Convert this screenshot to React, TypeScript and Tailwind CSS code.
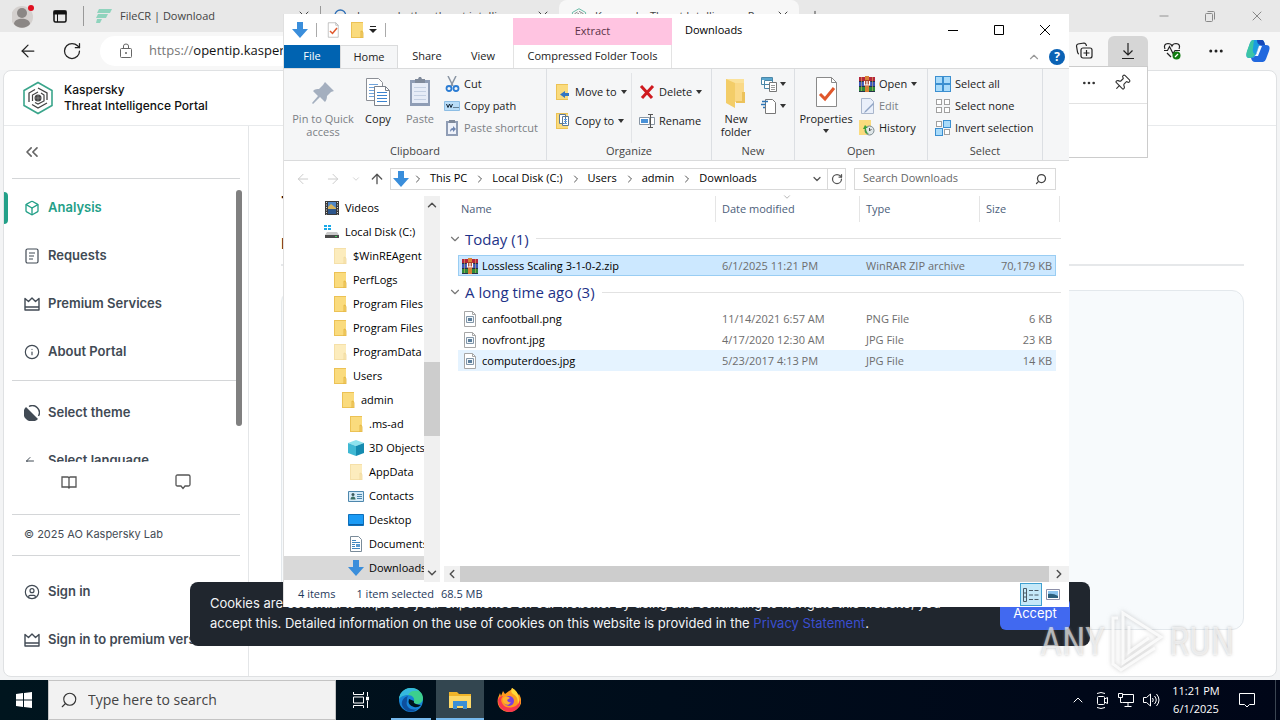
import type { ReactNode } from "react";
import clsx from "clsx";
import {
  ArrowLeft,
  ArrowRight,
  ArrowUp,
  Box,
  ChevronDown,
  ChevronRight,
  ChevronUp,
  ChevronsLeft,
  CircleUser,
  Ellipsis,
  Info,
  Minus,
  Pin,
  Plus,
  RotateCw,
  Search,
  X,
} from "lucide-react";

type TreeIcon = "video" | "disk" | "folder" | "faded" | "cube" | "contact" | "desktop" | "doc" | "down";

const TREE: { label: string; icon: TreeIcon; indent: string; active?: boolean }[] = [
  { label: "Videos", icon: "video", indent: "pl-10" },
  { label: "Local Disk (C:)", icon: "disk", indent: "pl-10" },
  { label: "$WinREAgent", icon: "faded", indent: "pl-12" },
  { label: "PerfLogs", icon: "folder", indent: "pl-12" },
  { label: "Program Files", icon: "folder", indent: "pl-12" },
  { label: "Program Files (x86)", icon: "folder", indent: "pl-12" },
  { label: "ProgramData", icon: "faded", indent: "pl-12" },
  { label: "Users", icon: "folder", indent: "pl-12" },
  { label: "admin", icon: "folder", indent: "pl-14" },
  { label: ".ms-ad", icon: "folder", indent: "pl-16" },
  { label: "3D Objects", icon: "cube", indent: "pl-16" },
  { label: "AppData", icon: "faded", indent: "pl-16" },
  { label: "Contacts", icon: "contact", indent: "pl-16" },
  { label: "Desktop", icon: "desktop", indent: "pl-16" },
  { label: "Documents", icon: "doc", indent: "pl-16" },
  { label: "Downloads", icon: "down", indent: "pl-16", active: true },
];

const GROUPS = [
  {
    title: "Today (1)",
    files: [
      { name: "Lossless Scaling 3-1-0-2.zip", date: "6/1/2025 11:21 PM", type: "WinRAR ZIP archive", size: "70,179 KB", state: "selected" },
    ],
  },
  {
    title: "A long time ago (3)",
    files: [
      { name: "canfootball.png", date: "11/14/2021 6:57 AM", type: "PNG File", size: "6 KB", state: "" },
      { name: "novfront.jpg", date: "4/17/2020 12:30 AM", type: "JPG File", size: "23 KB", state: "" },
      { name: "computerdoes.jpg", date: "5/23/2017 4:13 PM", type: "JPG File", size: "14 KB", state: "hover" },
    ],
  },
];

/* ---------- icons ---------- */

function DownArrow({ className = "h-4 w-4" }: { className?: string }) {
  return (
    <svg viewBox="0 0 16 16" className={className}>
      <path d="M5 0h6v7h5l-8 9-8-9h5z" fill="#3a8edb" />
    </svg>
  );
}

function Folder({ className = "h-4 w-4" }: { className?: string }) {
  return (
    <svg viewBox="0 0 16 16" className={className}>
      <path d="M2 0h12v15H2z" fill="#fadb7d" />
      <path d="M2 0h12v1H2zM2 0h1v15H2zM2 15h12v1H2z" fill="#ecc255" />
      <path d="M12 9q2 0 2 2v5h-2z" fill="#f7d26c" stroke="#dfb13c" strokeWidth=".8" />
    </svg>
  );
}

function RarBooks({ className = "h-4 w-4" }: { className?: string }) {
  return (
    <svg viewBox="0 0 16 16" className={className}>
      <path d="M0 1h16v4H0z" fill="#b5263c" />
      <path d="M0 6h16v4H0z" fill="#3a56b8" />
      <path d="M0 11h16v4H0z" fill="#2e8b3c" />
      <path d="M0 5h16v1H0zM0 10h16v1H0zM0 15h16v1H0z" fill="#26324a" />
      <path d="M2 1h1v14H2zM13 1h1v14h-1z" fill="#e9c860" opacity=".5" />
      <path d="M6 0h4v16H6z" fill="#d98236" />
      <path d="M5 4h6v6H5z" fill="#a9432c" />
      <path d="M5.500 5v4h5V5M8 5v4" fill="none" stroke="#fff" strokeWidth="1.200" />
    </svg>
  );
}

function ImageFile() {
  return (
    <svg viewBox="0 0 16 16" className="h-4 w-4 shrink-0">
      <path d="M2.500.5h8l3 3v12h-11z" fill="#fff" stroke="#a6a6a6" />
      <path d="M10.500.5v3h3" fill="none" stroke="#a6a6a6" />
      <path d="M4.500 5.500h7v6h-7z" fill="#f1f6fa" stroke="#8296a8" />
      <path d="M6 7h4v3H6z" fill="#5c7f9d" />
    </svg>
  );
}

function TreeGlyph({ icon }: { icon: TreeIcon }) {
  if (icon === "folder") return <Folder className="h-4 w-4 shrink-0" />;
  if (icon === "faded") return <Folder className="h-4 w-4 shrink-0 opacity-50" />;
  if (icon === "down") return <DownArrow className="h-4 w-4 shrink-0" />;
  return (
    <svg viewBox="0 0 16 16" className="h-4 w-4 shrink-0">
      {icon === "video" && (
        <>
          <path d="M1 1h14v14H1z" fill="#3b3b3b" />
          <path d="M4 2h8v6H4z" fill="#4f86c6" />
          <path d="M4 8h8v6H4z" fill="#2d568c" />
          <path d="M4 7l3-3 5 4v1H4z" fill="#d8b45c" />
          <path d="M2.500 2v13M13.500 2v13" stroke="#ddd" strokeDasharray="1 1.500" />
        </>
      )}
      {icon === "disk" && (
        <>
          <path d="M0 1h3v2H0zM4 1h3v2H4zM0 4h3v2H0zM4 4h3v2H4z" fill="#1aa9e8" />
          <path d="M3 8h10l2 3H1z" fill="#c9c9c9" />
          <path d="M1 11h14v3H1z" fill="#4a4a4a" />
          <path d="M11 12h2v1h-2z" fill="#43d15a" />
        </>
      )}
      {icon === "cube" && (
        <>
          <path d="M0 3l8-3 8 3-8 3z" fill="#8de3ee" />
          <path d="M0 3l8 3v10l-8-3z" fill="#3fb8d3" />
          <path d="M8 6l8-3v10l-8 3z" fill="#158bb0" />
        </>
      )}
      {icon === "contact" && (
        <>
          <path d="M.5 3.500h15v10H.5z" fill="#d5ebf8" stroke="#4d87ad" />
          <circle cx="5" cy="6.500" r="1.500" fill="#3d5a5c" />
          <path d="M2.500 11.500c0-4 5-4 5 0z" fill="#3d6f63" />
          <path d="M9 6.500h5M9 8.500h5M9 10.500h5" stroke="#4d87ad" />
        </>
      )}
      {icon === "desktop" && (
        <>
          <path d="M.5 2.500h15v11H.5z" fill="#1b9bf5" stroke="#0e6fba" />
          <path d="M1 12h14v1H1z" fill="#0b5fa5" />
        </>
      )}
      {icon === "doc" && (
        <>
          <path d="M2.500.5h8l3 3v12h-11z" fill="#fff" stroke="#7a8b99" />
          <path d="M4 4.500h4M4 6.500h8M4 8.500h3M4 10.500h3M4 12.500h8" stroke="#3f86bd" />
          <path d="M8 8h4v3H8z" fill="#5b9bd0" />
        </>
      )}
    </svg>
  );
}

function Caret() {
  return (
    <svg viewBox="0 0 6 4" className="h-1 w-1.5">
      <path d="M0 0h6L3 4z" fill="#333" />
    </svg>
  );
}

function PinBig() {
  return (
    <svg viewBox="0 0 32 32" className="h-8 w-8">
      <path d="M18 6l9 9-3 1-4 4c0 3-1 5-2 6l-5-5-7 7-1-1 6-7-5-5c2-2 4-2 6-2l4-4z" fill="#a4afbf" />
    </svg>
  );
}

function CopyPages() {
  return (
    <svg viewBox="0 0 32 32" className="h-8 w-8">
      <path d="M4.500 2.500h12l4 4v18h-16z" fill="#fff" stroke="#8b8f96" />
      <path d="M7 8.500h9M7 11.500h9M7 14.500h9M7 17.500h9M7 20.500h9" stroke="#6fa3db" />
      <path d="M12.500 10.500h11l4 4v15h-15z" fill="#fff" stroke="#7b828c" />
      <path d="M23.500 10.500v4h4" fill="none" stroke="#7b828c" />
      <path d="M15 16.500h10M15 19.500h10M15 22.500h10M15 25.500h10" stroke="#3b83cf" />
    </svg>
  );
}

function ClipboardBig() {
  return (
    <svg viewBox="0 0 32 32" className="h-8 w-8">
      <path d="M6 4h20v26H6z" fill="#8f9db5" />
      <path d="M8 7h16v20H8z" fill="#e6ecf7" />
      <path d="M11 3h3l1-2h2l1 2h3v4H11z" fill="#7f8a9b" />
      <path d="M10 11.500h12M10 15.500h12M10 19.500h12M10 23.500h12" stroke="#c3cfe2" />
    </svg>
  );
}

function CheckPage({ className }: { className: string }) {
  return (
    <svg viewBox="0 0 32 32" className={className}>
      <path d="M6.500 1.500h15l5 5v24h-20z" fill="#fff" stroke="#8a8a8a" />
      <path d="M21.500 1.500v5h5" fill="none" stroke="#8a8a8a" />
      <path d="M10 18l5 5 9-11" fill="none" stroke="#e0572b" strokeWidth="3" />
    </svg>
  );
}

function FolderBig() {
  return (
    <svg viewBox="0 0 32 32" className="h-8 w-8">
      <path d="M6 3h18v23H6z" fill="#fbe29a" />
      <path d="M6 3l9 4v25l-9-5z" fill="#f3cd68" />
      <path d="M15 7h9v19h-9z" fill="#fad987" />
      <path d="M22 16h3v11h-9v-2h6z" fill="#ecc25b" />
    </svg>
  );
}

function Tiles({ kind }: { kind: "all" | "none" | "invert" }) {
  const cells = [
    [1, 1],
    [9, 1],
    [1, 9],
    [9, 9],
  ];
  return (
    <svg viewBox="0 0 16 16" className="h-4 w-4">
      {cells.map(([x, y], i) => {
        const on = kind === "all" || (kind === "invert" && (i === 1 || i === 2));
        return on ? (
          <rect key={i} x={x - 0.5} y={y - 0.5} width="7" height="7" fill="#a9dbfa" stroke="#3b8fd0" />
        ) : (
          <rect key={i} x={x + 0.5} y={y + 0.5} width="5" height="5" fill="#fff" stroke="#a0a0a0" />
        );
      })}
    </svg>
  );
}

/* ---------- browser ---------- */

function BrowserTab({ label, icon, className }: { label: string; icon: ReactNode; className: string }) {
  return (
    <div className={clsx("flex h-full items-center gap-2 pr-2", className)}>
      {icon}
      <button className="flex-1 truncate text-left">{label}</button>
      <button aria-label="Close tab">
        <X className="h-4 w-4" strokeWidth={1.5} />
      </button>
    </div>
  );
}

function BrowserChrome() {
  return (
    <div className="text-[11px] text-[#444]">
      <div className="flex h-8 items-center bg-[#e8e8e8]">
        <button aria-label="Profile" className="ml-3 mr-4">
          <svg viewBox="0 0 24 24" className="h-6 w-6">
            <circle cx="10" cy="13" r="11" fill="#d4d0ce" />
            <circle cx="10" cy="9" r="5" fill="#8b8785" />
            <path d="M2 20c0-7 16-7 16 0-4 5-12 5-16 0z" fill="#8b8785" />
            <circle cx="19" cy="4" r="3" fill="#e01020" />
          </svg>
        </button>
        <button aria-label="Tab actions">
          <svg viewBox="0 0 16 16" className="h-4 w-4">
            <rect x="2" y="3" width="12" height="11" rx="1.500" fill="none" stroke="#111" strokeWidth="1.500" />
            <path d="M1.500 2.500h13v4h-13z" fill="#111" />
            <path d="M5.500 6v8" stroke="#111" />
          </svg>
        </button>
        <div className="ml-[15px] h-5 w-px bg-[#999]" />
        <BrowserTab
          className="w-[236px] pl-3"
          label="FileCR | Download"
          icon={
            <svg viewBox="0 0 16 16" className="h-4 w-4 shrink-0">
              <path d="M3 1h13l-2 4H1zM2 6h10l-2 4H0zM1 11h5l-2 4H0z" fill="#8fd3bd" />
            </svg>
          }
        />
        <div className="h-5 w-px bg-[#999]" />
        <BrowserTab
          className="w-[238px] pl-3"
          label="Learn whether threat intelligence"
          icon={<Search className="h-4 w-4 text-[#2f6fb5]" />}
        />
        <BrowserTab
          className="w-60 rounded-t-lg bg-[#f7f7f7] pl-3"
          label="Kaspersky Threat Intelligence Portal"
          icon={<KasperskyMark className="h-4 w-4" />}
        />
        <button aria-label="New tab" className="ml-2">
          <Plus className="h-4 w-4" strokeWidth={1.5} />
        </button>
        <div className="ml-auto flex items-center gap-8 pr-[15px] text-[#888]">
          <button aria-label="Minimize browser">
            <Minus className="h-3.5 w-3.5" strokeWidth={1.5} />
          </button>
          <button aria-label="Restore browser">
            <svg viewBox="0 0 14 14" className="h-3.5 w-3.5" fill="none" stroke="currentColor">
              <rect x="2.500" y="4.500" width="7" height="8" rx="1" />
              <path d="M4.500 2.500h6q1 0 1 1v7" />
            </svg>
          </button>
          <button aria-label="Close browser">
            <X className="h-4 w-4" strokeWidth={1.5} />
          </button>
        </div>
      </div>
      <div className="flex h-[38px] items-center bg-[#f7f7f7] text-[#222]">
        <button aria-label="Back" className="ml-[18px]">
          <ArrowLeft className="h-5 w-5" strokeWidth={1.5} />
        </button>
        <button aria-label="Reload" className="mr-[18px] ml-6">
          <RotateCw className="h-5 w-5" strokeWidth={1.5} />
        </button>
        <button aria-label="Address" className="flex h-[30px] flex-1 items-center rounded-full bg-white pl-[19px] text-[13px]">
          <svg viewBox="0 0 14 16" className="mr-4 h-4 w-3.5" fill="none" stroke="#666">
            <rect x="1.500" y="5.500" width="11" height="9" rx="1" />
            <path d="M4.500 5.500V3q0-2 2.500-2t2.500 2v2.500" />
            <circle cx="7" cy="10" r=".6" fill="#666" />
          </svg>
          <span className="text-[#777]">https://</span>
          <span className="text-[#111]">opentip.kaspersky.com</span>
        </button>
        <div className="flex items-center">
          <button aria-label="Collections" className="flex w-12 justify-center">
            <svg viewBox="0 0 18 18" className="h-[18px] w-[18px]" fill="none" stroke="#222" strokeWidth="1.200">
              <rect x="6" y="6" width="11" height="10" rx="2" />
              <path d="M11.500 8v6M8.500 11h6M4 12Q3 12 2.500 10L1.500 4q0-1.500 1.500-2l6-1q2 0 2.500 3" />
            </svg>
          </button>
          <button aria-label="Downloads" className="flex h-[30px] w-10 items-center justify-center rounded-t-md bg-[#d6d6d6]">
            <svg viewBox="0 0 16 16" className="h-4 w-4" fill="none" stroke="#222" strokeWidth="1.200">
              <path d="M8 0v12M3.500 7.500L8 12l4.500-4.500M2 15.500h12" />
            </svg>
          </button>
          <button aria-label="Browser essentials" className="flex w-12 justify-center">
            <svg viewBox="0 0 18 18" className="h-[18px] w-[18px]" fill="none" stroke="#222" strokeWidth="1.200">
              <path d="M2 7Q0 2 5 1.500q3 0 4 2.500 1-2.500 4-2.500Q18 2 16 7M1 8.500h3.500l2-4 3.500 7 2-3h5M4 11l4 4" />
              <circle cx="13.500" cy="13.500" r="4" fill="#107c10" stroke="none" />
              <path d="M12 15l3-3" stroke="#fff" />
            </svg>
          </button>
          <button aria-label="More" className="flex w-10 justify-center">
            <Ellipsis className="h-[18px] w-[18px]" />
          </button>
          <button aria-label="Copilot" className="flex w-11 justify-center">
            <svg viewBox="0 0 24 24" className="h-6 w-6">
              <path d="M7 1h9q2 0 3 5h-4q-2 0-3 3l-2 6q-1 4-4 4H3q-4 0-2-6l3-9q1-3 3-3z" fill="#1b9de0" />
              <path d="M1 12l3-8q1-3 4-3l-1 8q-1 5 2 6-2 4-5 4-5 0-3-7z" fill="#3cc5a5" />
              <path d="M17 23H9q-3 0-4-4 4 0 5-4l2-6q1-3 4-3h4q5 0 3 6l-3 8q-1 3-3 3z" fill="#2168de" />
              <path d="M13 7h3l-4 10H8q2 0 3-4z" fill="#f4fbff" />
              <path d="M8 1h8q2 0 3 5h-5q-3-1-3-5z" fill="#1547b8" />
            </svg>
          </button>
        </div>
      </div>
    </div>
  );
}

function DownloadsFlyout() {
  return (
    <div className="absolute top-[66px] right-[132px] h-[92px] w-80 border border-[#ccc] bg-white">
      <div className="flex h-[37px] items-center justify-end gap-4 border-b border-[#e2e2e2] pr-4 pb-1 text-[#333]">
        <Ellipsis className="h-4 w-4" />
        <Pin className="h-[18px] w-[18px] rotate-45" strokeWidth={1.5} />
      </div>
    </div>
  );
}

function KasperskyMark({ className }: { className: string }) {
  return (
    <svg viewBox="0 0 32 34" className={className} fill="none">
      <path d="M16 1.500l14 8v15l-14 8-14-8v-15z" stroke="#3aa58b" strokeWidth="1.600" />
      <path d="M7 21v-9l6-3.500M16 7l9 5v7M25 22l-9 5-6-3.500" stroke="#444" strokeWidth="1.300" />
      <path d="M10.500 20v-6l5.500-3M19 12l3 2v6l-6 3-3-1.500" stroke="#444" strokeWidth="1.200" />
      <circle cx="16" cy="17" r="3.500" fill="#444" />
      <path d="M13 17h6M16 14v6" stroke="#aaa" strokeWidth=".5" />
    </svg>
  );
}

function PremiumCrown({ className }: { className: string }) {
  return (
    <svg viewBox="0 0 16 16" className={className} fill="none" stroke="currentColor" strokeWidth="1.400">
      <path d="M1 2.500l3.500 3L8 2l3.500 3.500 3.500-3v11.500H1zM1 11h14" strokeLinejoin="round" />
    </svg>
  );
}

function NavItem({ icon, label, active }: { icon: ReactNode; label: string; active?: boolean }) {
  return (
    <a
      href="#"
      className={clsx(
        "flex h-12 items-center gap-2 pl-3 text-[13px] font-semibold whitespace-nowrap",
        active ? "text-[#23a088]" : "text-[#414a54]",
      )}
    >
      {icon}
      {label}
    </a>
  );
}

function Sidebar() {
  const glyph = "h-4 w-4 shrink-0";
  return (
    <aside className="relative flex w-[245px] shrink-0 flex-col border-r border-[#e4e6e8]">
      <button aria-label="Collapse menu" className="flex h-[52px] items-center pl-[18px] text-[#666]">
        <ChevronsLeft className="h-5 w-5" strokeWidth={2} />
      </button>
      <nav className="mx-2 h-[284px] overflow-hidden border-t border-[#d4d6d8] pt-[5px]">
        <NavItem
          active
          icon={<Box className={glyph} />}
          label="Analysis"
        />
        <NavItem
          icon={
            <svg viewBox="0 0 16 16" className={glyph} fill="none" stroke="currentColor" strokeWidth="1.200">
              <rect x="2" y="1" width="12" height="14" rx="1.500" />
              <path d="M5 5h6M5 8h5M5 11h4" />
            </svg>
          }
          label="Requests"
        />
        <NavItem icon={<PremiumCrown className={glyph} />} label="Premium Services" />
        <NavItem icon={<Info className={glyph} strokeWidth={1.75} />} label="About Portal" />
        <div className="mt-1 border-t border-[#d4d6d8] pt-2">
          <NavItem
            icon={
              <svg viewBox="0 0 16 16" className={glyph}>
                <path d="M5 1.500A7 7 0 0 1 14.500 11" fill="none" stroke="currentColor" strokeWidth="1.400" />
                <path d="M2 2l12 12A8 8 0 0 1 2 2z" fill="currentColor" />
              </svg>
            }
            label="Select theme"
          />
          <NavItem icon={<ArrowLeft className="mr-1 h-3 w-3 shrink-0" />} label="Select language" />
        </div>
      </nav>
      <div className="absolute top-16 right-[6px] h-[236px] w-[6px] rounded-full bg-[#808080]" />
      <div className="mx-2 flex h-[53px] items-center justify-around border-b border-[#d4d6d8] pb-3 text-[#555]">
        <button aria-label="Documentation">
          <svg viewBox="0 0 16 16" className={glyph} fill="none" stroke="currentColor" strokeWidth="1.300">
            <path d="M1 3h6l1 1 1-1h6v10H9l-1 1-1-1H1zM8 4v10" />
          </svg>
        </button>
        <button aria-label="Feedback">
          <svg viewBox="0 0 16 16" className={glyph} fill="none" stroke="currentColor" strokeWidth="1.300">
            <path d="M2.500 1h11q1.500 0 1.500 1.500v8q0 1.500-1.500 1.500H10l-2 2.500L6 12H2.500Q1 12 1 10.500v-8Q1 1 2.500 1z" />
          </svg>
        </button>
      </div>
      <p className="mx-2 flex h-[41px] items-center border-b border-[#d4d6d8] pb-px pl-3 text-[11px] text-[#444c55]">
        © 2025 AO Kaspersky Lab
      </p>
      <div className="mx-2 pt-3">
        <NavItem icon={<CircleUser className={glyph} strokeWidth={1.75} />} label="Sign in" />
        <NavItem icon={<PremiumCrown className={glyph} />} label="Sign in to premium version" />
      </div>
    </aside>
  );
}

function PortalPage() {
  return (
    <div className="relative mx-[3px] mb-[3px] flex flex-1 flex-col rounded-lg border border-[#dfe1e3] bg-white font-['Inter',sans-serif]">
      <header className="flex h-[55px] shrink-0 items-center gap-2.5 border-b border-[#e8eaec] pl-[18px]">
        <KasperskyMark className="h-[34px] w-8" />
        <p className="text-xs leading-4 font-medium text-[#111]">
          Kaspersky
          <br />
          Threat Intelligence Portal
        </p>
      </header>
      <div className="flex flex-1">
        <Sidebar />
        <main className="flex flex-1 flex-col px-8 pt-[68px] pb-[46px]">
          <h1 className="text-xl leading-5 font-semibold text-[#111]">Threat Analysis</h1>
          <div className="mt-[22px] mb-6 border-b-2 border-[#e6e8ea] pb-3 text-sm leading-4 text-[#111]">Lookup</div>
          <section className="flex-1 rounded-xl border border-[#e3e8ec] bg-[#f7fafc]" />
        </main>
      </div>
      <div className="absolute top-[121px] left-0 h-8 w-1 rounded-r bg-[#23a088]" />
    </div>
  );
}

function CookieBanner() {
  return (
    <div className="absolute right-[190px] bottom-[74px] left-[190px] flex h-16 items-center justify-between rounded-lg bg-[#20262e] px-5 font-['Inter',sans-serif]">
      <p className="max-w-[760px] pb-0.5 text-[13px] leading-5 text-[#f2f4f6]">
        Cookies are essential to improve your experience on our website. By using and continuing to navigate this website, you
        <br />
        accept this. Detailed information on the use of cookies on this website is provided in the{" "}
        <a href="#" className="text-[#3b4ed0]">
          Privacy Statement
        </a>
        .
      </p>
      <button className="h-8 w-[70px] rounded-md bg-[#4169f0] text-[13px] text-white">Accept</button>
    </div>
  );
}

/* ---------- explorer window ---------- */

function RibbonGroup({ title, className, children }: { title: string; className: string; children: ReactNode }) {
  return (
    <div className={clsx("flex flex-col border-r border-[#dcdfe3] pt-1", className)}>
      <div className="flex h-[70px]">{children}</div>
      <p className="text-center leading-4 text-[#444]">{title}</p>
    </div>
  );
}

function BigButton({ icon, label, className, muted }: { icon: ReactNode; label: ReactNode; className: string; muted?: boolean }) {
  return (
    <button
      className={clsx("flex flex-col items-center gap-1 self-start pt-[3px] leading-[13px]", className, muted && "text-[#7b7f85]")}
    >
      {icon}
      <span className="text-center whitespace-nowrap">{label}</span>
    </button>
  );
}

function RibbonButton({ icon, label, menu, muted }: { icon: ReactNode; label: string; menu?: boolean; muted?: boolean }) {
  return (
    <button className={clsx("flex h-[22px] items-center gap-1 whitespace-nowrap", muted && "text-[#7b7f85]")}>
      {icon}
      {label}
      {menu && <Caret />}
    </button>
  );
}

function Ribbon() {
  return (
    <div className="flex h-[93px] border-y border-[#dadbdc] bg-[#f5f6f7]">
      <RibbonGroup title="Clipboard" className="w-[263px]">
        <BigButton
          muted
          className="w-[78px]"
          icon={<PinBig />}
          label={
            <>
              Pin to Quick
              <br />
              access
            </>
          }
        />
        <BigButton className="w-8" icon={<CopyPages />} label="Copy" />
        <BigButton muted className="ml-2 w-9" icon={<ClipboardBig />} label="Paste" />
        <div className="ml-1.5 flex flex-col">
          <RibbonButton
            icon={
              <svg viewBox="0 0 16 16" className="h-4 w-4" fill="none">
                <path d="M4 0l5 10M12 0L7 10" stroke="#8a95a3" strokeWidth="1.500" />
                <circle cx="5" cy="12.500" r="2.500" stroke="#2b7cd3" strokeWidth="1.800" />
                <circle cx="12" cy="12.500" r="2.500" stroke="#2b7cd3" strokeWidth="1.800" />
              </svg>
            }
            label="Cut"
          />
          <RibbonButton
            icon={
              <svg viewBox="0 0 16 16" className="h-4 w-4">
                <path d="M.5 3.500h15v9H.5z" fill="#b9ddf8" stroke="#8cbde4" />
                <path d="M2.500 6l1.500 3.500L5.500 6 7 9.500 8.500 6M9.500 9.500h1M11.500 9.500h1M13.500 9.500h1" stroke="#123" fill="none" />
              </svg>
            }
            label="Copy path"
          />
          <RibbonButton
            muted
            icon={
              <svg viewBox="0 0 16 16" className="h-4 w-4">
                <path d="M2 1h12v15H2z" fill="#8f9db5" />
                <path d="M4 3h8v11H4z" fill="#eef2fa" />
                <path d="M5 0h6v3H5z" fill="#7f8a9b" />
                <path d="M6 12q0-4 3-4V6l3 3-3 3v-2q-2 0-3 2z" fill="#6f86b0" />
              </svg>
            }
            label="Paste shortcut"
          />
        </div>
      </RibbonGroup>
      <RibbonGroup title="Organize" className="w-[165px]">
        <div className="flex w-[85px] flex-col gap-[7px] border-r border-[#e2e4e7] pt-2 pl-2">
          <RibbonButton
            menu
            icon={
              <svg viewBox="0 0 16 16" className="h-4 w-4">
                <path d="M1 0h12v15H1z" fill="#fadb7d" />
                <path d="M1 0h12v1H1zM1 0h1v15H1zM1 15h12v1H1z" fill="#ecc255" />
                <path d="M14 9v3h-4v2l-5-3.500L10 7v2z" fill="#3476c4" />
              </svg>
            }
            label="Move to"
          />
          <RibbonButton
            menu
            icon={
              <svg viewBox="0 0 16 16" className="h-4 w-4">
                <path d="M1 0h12v15H1z" fill="#fadb7d" />
                <path d="M1 0h12v1H1zM1 0h1v15H1zM1 15h12v1H1z" fill="#ecc255" />
                <path d="M4.500 1.500h6v9h-6zM7.500 3.500h6v9h-6z" fill="#fff" stroke="#5c7896" />
                <path d="M9 6.500h3M9 8.500h3M9 10.500h3" stroke="#5a9be0" />
              </svg>
            }
            label="Copy to"
          />
        </div>
        <div className="flex flex-col gap-[7px] pt-2 pl-[7px]">
          <RibbonButton
            menu
            icon={
              <svg viewBox="0 0 16 16" className="h-4 w-4">
                <path d="M2 2l11 12M14 2L3 14" stroke="#cf1a1f" strokeWidth="3" />
              </svg>
            }
            label="Delete"
          />
          <RibbonButton
            icon={
              <svg viewBox="0 0 16 16" className="h-4 w-4" fill="none">
                <path d="M.5 4.500h10v7H.5zM12 4.500h3.500v7H12" fill="#fff" stroke="#8895a3" />
                <path d="M2 6h7v4H2z" fill="#4a92d8" />
                <path d="M9 1.500h5M11.500 1.500v13M9 14.500h5" stroke="#555" />
              </svg>
            }
            label="Rename"
          />
        </div>
      </RibbonGroup>
      <RibbonGroup title="New" className="w-[83px]">
        <BigButton
          className="ml-1 w-10"
          icon={<FolderBig />}
          label={
            <>
              New
              <br />
              folder
            </>
          }
        />
        <div className="flex flex-col pl-[5px]">
          <button aria-label="New item" className="flex h-[22px] items-center gap-[3px]">
            <svg viewBox="0 0 16 16" className="h-4 w-4" fill="#fff">
              <path d="M.5 1.500h11v7H.5zM3.500 4.500h8v8h-8z" stroke="#4b87a8" />
              <path d="M8.500 6.500h7v9h-7z" stroke="#777" />
              <path d="M1 2h10v2H1z" fill="#5aa7cf" />
              <path d="M10 9.500h4M10 11.500h4M10 13.500h4" stroke="#999" />
            </svg>
            <Caret />
          </button>
          <button aria-label="Easy access" className="flex h-[22px] items-center gap-[3px]">
            <svg viewBox="0 0 16 16" className="h-4 w-4" fill="#fff">
              <path d="M4.500 1.500h7l3 3v11h-10z" stroke="#777" />
              <path d="M1 3.500h6M0 6.500h5M2 9.500h2" stroke="#2e75b5" strokeWidth="1.500" />
            </svg>
            <Caret />
          </button>
        </div>
      </RibbonGroup>
      <RibbonGroup title="Open" className="w-[133px]">
        <BigButton
          className="w-[62px]"
          icon={<CheckPage className="h-8 w-8" />}
          label={
            <>
              Properties
              <span className="flex h-3 items-center justify-center">
                <Caret />
              </span>
            </>
          }
        />
        <div className="flex flex-col pl-0.5">
          <RibbonButton menu icon={<RarBooks />} label="Open" />
          <RibbonButton
            muted
            icon={
              <svg viewBox="0 0 16 16" className="h-4 w-4">
                <path d="M2.500.5h9l3 3v12h-12z" fill="#e9effa" stroke="#a9b6cc" />
                <path d="M14 5l-8 8-1 2 2-1 8-8z" fill="#8fa4c4" />
              </svg>
            }
            label="Edit"
          />
          <RibbonButton
            icon={
              <svg viewBox="0 0 16 16" className="h-4 w-4">
                <path d="M0 0h12v15H0z" fill="#fadb7d" />
                <circle cx="10.500" cy="10.500" r="4.500" fill="#dfe6e8" stroke="#7b8a90" />
                <path d="M4 9l2-4 3 3-2 0q0 4 3 6-5 0-4-5z" fill="#3ba03b" />
                <path d="M10.500 8v3l2-2" stroke="#555" fill="none" />
              </svg>
            }
            label="History"
          />
        </div>
      </RibbonGroup>
      <RibbonGroup title="Select" className="w-[115px]">
        <div className="flex flex-col pl-[7px]">
          <RibbonButton icon={<Tiles kind="all" />} label="Select all" />
          <RibbonButton icon={<Tiles kind="none" />} label="Select none" />
          <RibbonButton icon={<Tiles kind="invert" />} label="Invert selection" />
        </div>
      </RibbonGroup>
    </div>
  );
}

function TitleBar() {
  return (
    <div className="flex h-[54px] bg-white">
      <div className="flex w-[229px] flex-col">
        <div className="flex h-[31px] items-center gap-2 pl-2">
          <DownArrow />
          <div className="h-3.5 w-px bg-[#aaa]" />
          <CheckPage className="h-4 w-4" />
          <Folder className="h-4 w-4" />
          <svg viewBox="0 0 8 8" className="-ml-1 h-2 w-2">
            <path d="M1 0h6v1H1zM0 3h8L4 7z" fill="#222" />
          </svg>
          <div className="h-3.5 w-px bg-[#aaa]" />
        </div>
        <div className="flex h-[23px]">
          <button className="w-14 bg-[#0063b1] text-white">File</button>
          <button className="w-[58px] border-x border-t border-[#dadbdc] bg-[#f5f6f7]">Home</button>
          <button className="w-[58px]">Share</button>
          <button className="w-[54px]">View</button>
        </div>
      </div>
      <div className="mt-1 flex w-[159px] flex-col">
        <div className="flex h-[27px] items-center justify-center bg-[#ffc4e1] text-[#5b3348]">Extract</div>
        <button className="h-[23px] border-x border-[#e3e3e3] whitespace-nowrap">Compressed Folder Tools</button>
      </div>
      <p className="pt-[8px] pl-[13px] leading-4 text-black">Downloads</p>
      <div className="ml-auto flex flex-col">
        <div className="flex h-[31px] items-center gap-[34px] pr-[18px] text-black">
          <button aria-label="Minimize">
            <svg viewBox="0 0 12 12" className="h-3 w-3" stroke="currentColor">
              <path d="M1 6.500h10" />
            </svg>
          </button>
          <button aria-label="Maximize">
            <svg viewBox="0 0 12 12" className="h-3 w-3" stroke="currentColor" fill="none">
              <path d="M1.500 1.500h9v9h-9z" />
            </svg>
          </button>
          <button aria-label="Close">
            <svg viewBox="0 0 12 12" className="h-3 w-3" stroke="currentColor">
              <path d="M1 1l10 10M11 1L1 11" />
            </svg>
          </button>
        </div>
        <div className="flex h-[23px] items-center justify-end gap-2 pr-1">
          <ChevronUp className="h-3.5 w-3.5 text-[#999]" />
          <button aria-label="Help" className="h-4 w-4 rounded-full bg-[#0a62b5] text-xs leading-4 font-bold text-white">
            ?
          </button>
        </div>
      </div>
    </div>
  );
}

function AddressRow() {
  const crumbs = ["This PC", "Local Disk (C:)", "Users", "admin", "Downloads"];
  return (
    <div className="flex h-[35px] items-center pr-[13px] pl-[11px] text-black">
      <ArrowLeft className="h-4 w-4 text-[#ccc]" strokeWidth={1.5} />
      <ArrowRight className="ml-3.5 h-4 w-4 text-[#ccc]" strokeWidth={1.5} />
      <ChevronDown className="ml-2.5 h-2.5 w-2.5 text-[#ccc]" />
      <ArrowUp className="mr-[5px] ml-2 h-4 w-4 text-[#555]" />
      <div className="flex h-[22px] flex-1 items-center border border-[#d9d9d9] pl-[2px]">
        <DownArrow />
        {crumbs.map((crumb) => (
          <span key={crumb} className="flex items-center first-of-type:-ml-1">
            <ChevronRight className="mr-1.5 ml-[7px] h-3 w-3 text-[#555]" />
            <button className="whitespace-nowrap">{crumb}</button>
          </span>
        ))}
        <ChevronDown className="ml-auto mr-1 h-3 w-3 text-[#555]" strokeWidth={2.5} />
        <button aria-label="Refresh" className="flex h-full w-[18px] items-center justify-center border-l border-[#d9d9d9]">
          <RotateCw className="h-3 w-3 text-[#555]" strokeWidth={2.5} />
        </button>
      </div>
      <label className="ml-2 flex h-[22px] w-[202px] items-center border border-[#d9d9d9] pr-2 pl-2">
        <input aria-label="Search Downloads" placeholder="Search Downloads" className="min-w-0 flex-1 outline-none placeholder:text-[#666]" />
        <Search className="h-3 w-3 -scale-x-100 text-[#444]" strokeWidth={2.5} />
      </label>
    </div>
  );
}

function FolderTree() {
  return (
    <div className="flex w-[156px] shrink-0">
      <ul className="w-[140px] overflow-hidden text-black">
        {TREE.map((node, i) => (
          <li key={i} className={clsx("flex h-6 items-center gap-[5px] whitespace-nowrap", node.indent, node.active && "bg-[#d9d9d9]")}>
            <TreeGlyph icon={node.icon} />
            {node.label}
          </li>
        ))}
      </ul>
      <div className="flex w-4 flex-col items-center bg-[#f0f0f0]">
        <ChevronUp className="my-0.5 h-3.5 w-3.5 text-[#505050]" strokeWidth={2.5} />
        <div className="mt-auto mb-[130px] h-[74px] w-full bg-[#cdcdcd]" />
        <ChevronDown className="mb-0.5 h-3.5 w-3.5 text-[#505050]" strokeWidth={2.5} />
      </div>
    </div>
  );
}

function FileTable() {
  const cell = "border-y leading-4";
  return (
    <table className="w-full table-fixed border-separate border-spacing-0 text-left text-[#6d6d6d]">
      <colgroup>
        <col className="w-[14px]" />
        <col />
        <col className="w-36" />
        <col className="w-[120px]" />
        <col className="w-[76px]" />
        <col className="w-1" />
        <col className="w-[9px]" />
      </colgroup>
      <thead>
        <tr className="h-[26px] text-[#4c607a]">
          <th />
          <th className="border-r border-[#e5e5e5] pl-[3px] font-normal">Name</th>
          <th className="relative border-r border-[#e5e5e5] pl-1.5 font-normal">
            Date modified
            <ChevronDown className="absolute -top-1 left-[66px] h-2.5 w-2.5 text-[#888]" strokeWidth={1.5} />
          </th>
          <th className="border-r border-[#e5e5e5] pl-1.5 font-normal">Type</th>
          <th colSpan={2} className="border-r border-[#e5e5e5] pl-1.5 font-normal">
            Size
          </th>
          <th />
        </tr>
      </thead>
      {GROUPS.map((group, g) => (
        <tbody key={group.title}>
          <tr className={g === 0 ? "h-[33px]" : "h-8"}>
            <th colSpan={7} className="pr-2 pl-1 text-[15px] leading-5 font-normal text-[#1e3287]">
              <span className="flex items-center gap-[3px]">
                <ChevronDown className="h-3.5 w-3.5 text-[#777]" strokeWidth={2} />
                {group.title}
                <span className="ml-1 h-px flex-1 bg-[#e2e2e2]" />
              </span>
            </th>
          </tr>
          {group.files.map((file) => {
            const tone =
              file.state === "selected"
                ? "border-[#99cdf3] bg-[#cce8ff]"
                : file.state === "hover"
                  ? "border-[#e5f3ff] bg-[#e5f3ff]"
                  : "border-transparent";
            return (
              <tr key={file.name} className="h-[21px]">
                <td />
                <td className={clsx(cell, tone, "border-l pl-[3px] text-black")}>
                  <span className="flex items-center gap-1">
                    {file.state === "selected" ? <RarBooks /> : <ImageFile />}
                    {file.name}
                  </span>
                </td>
                <td className={clsx(cell, tone, "pl-1.5")}>{file.date}</td>
                <td className={clsx(cell, tone, "pl-1.5")}>{file.type}</td>
                <td className={clsx(cell, tone, "border-r pr-[3px] text-right")}>{file.size}</td>
                <td colSpan={2} />
              </tr>
            );
          })}
        </tbody>
      ))}
    </table>
  );
}

function ExplorerWindow() {
  return (
    <section className="absolute top-[14px] left-[283px] flex w-[786px] flex-col border-l border-[#e0e0e0] bg-white text-[11px] text-[#222]">
      <TitleBar />
      <Ribbon />
      <AddressRow />
      <div className="flex h-[386px]">
        <FolderTree />
        <div className="flex min-w-0 flex-1 flex-col justify-between pl-1">
          <FileTable />
          <div className="flex h-4 items-center bg-[#f0f0f0]">
            <ChevronRight className="mx-px h-3.5 w-3.5 rotate-180 text-[#505050]" strokeWidth={2.5} />
            <div className="h-full flex-1 bg-[#cdcdcd]" />
            <ChevronRight className="mx-[3px] h-3.5 w-3.5 text-[#505050]" strokeWidth={2.5} />
          </div>
        </div>
      </div>
      <div className="flex h-[25px] items-center pr-[5px] pl-3.5 text-[#1e395b]">
        <span>4 items</span>
        <span className="ml-[21px]">1 item selected</span>
        <span className="ml-[7px]">68.5 MB</span>
        <button aria-label="Details view" className="ml-auto flex h-[23px] w-[22px] items-center justify-center border border-[#3fa0d0] bg-[#c5e9f9]">
          <svg viewBox="0 0 16 14" className="h-3.5 w-4" stroke="#4a5a66" fill="none">
            <path d="M.5.5h3v13h-3zM.5 5h3M.5 9h3M6 2.500h4M11.500 2.500h4M6 7h4M11.500 7h4M6 11.500h4M11.500 11.500h4" />
          </svg>
        </button>
        <button aria-label="Large icons view" className="flex h-[23px] w-[22px] items-center justify-center">
          <svg viewBox="0 0 14 11" className="h-[11px] w-3.5">
            <path d="M.5.5h13v10H.5z" fill="#fff" stroke="#8c8fa8" />
            <path d="M2 2h10v7H2z" fill="#8cc4ee" />
            <path d="M2 5q5-1 10 2v2H2z" fill="#2c5f7c" />
          </svg>
        </button>
      </div>
    </section>
  );
}

/* ---------- taskbar ---------- */

function Taskbar() {
  return (
    <footer className="flex h-10 items-center bg-linear-to-r from-[#00151e] to-[#000618] text-white">
      <button aria-label="Start" className="flex w-12 justify-center">
        <svg viewBox="0 0 16 16" className="h-4 w-4" fill="#fff">
          <path d="M0 2l7-1v6.500H0zM8 1l8-1v7.500H8zM0 8.500h7V15l-7-1zM8 8.500h8V16l-8-1z" />
        </svg>
      </button>
      <label className="flex h-full w-72 items-center gap-2.5 border border-[#c4c4c4] bg-[#f2f2f2] pl-[11px] text-[#333]">
        <Search className="h-[18px] w-[18px] -scale-x-100" strokeWidth={1.5} />
        <input
          aria-label="Type here to search"
          placeholder="Type here to search"
          className="min-w-0 flex-1 text-sm outline-none placeholder:text-[#444]"
        />
      </label>
      <button aria-label="Task view" className="flex w-[50px] justify-center">
        <svg viewBox="0 0 18 16" className="h-4 w-[18px]" fill="none" stroke="#fff">
          <path d="M1.500 0v2.500h10V0M1.500 16v-2.500h10V16M1.500 5h10v6h-10zM15.500 0v4M15.500 9v7" />
          <path d="M14.500 5h2v3h-2z" fill="#fff" />
        </svg>
      </button>
      <button aria-label="Edge" className="flex h-full w-[50px] flex-col items-center px-[5px] pt-2">
        <svg viewBox="0 0 24 24" className="h-6 w-6">
          <circle cx="12" cy="12" r="12" fill="#1784d8" />
          <path d="M0 11C1 4 6 0 12 0c7 0 12 5 12 10 0 4-3 6-6 6-2 0-4-1-3-3 1-3-2-6-6-6-5 0-8 2-9 4z" fill="#3ccf8e" />
          <path d="M0 11C1 4 6 0 12 0c3 0 6 1 8 3-6-1-9 0-11 4-5 0-8 2-9 4z" fill="#35b8e0" />
          <path d="M8 13c-2 6 4 10 10 8-6 5-13 2-15-4-1-4 2-8 6-9-1 1-1 3-1 5z" fill="#0d4f9e" />
          <path d="M10 11q-2 6 5 8 4 1 7-2-2 0-5-1-3-1-2-3z" fill="#00151e" />
        </svg>
        <span className="mt-auto h-0.5 w-full bg-[#76b9ed]" />
      </button>
      <button aria-label="File Explorer" className="flex h-full w-12 flex-col items-center bg-[#334650] pt-2.5">
        <svg viewBox="0 0 24 20" className="h-5 w-6">
          <path d="M1 2h8l2 2h12v14H1z" fill="#f0b429" />
          <path d="M1 6h22v12H1z" fill="#fdd868" />
          <path d="M5 11h14v8h-4v-3H9v3H5z" fill="#3a8fd6" />
        </svg>
        <span className="mt-auto h-0.5 w-full bg-[#76b9ed]" />
      </button>
      <button aria-label="Firefox" className="flex w-[50px] justify-center">
        <svg viewBox="0 0 24 24" className="h-6 w-6">
          <path d="M12 3q3-1 3-3 5 3 6 7l1-1q5 9-1 14-6 6-14 3-8-4-6-13l2-5 1 3 2-5 2 3z" fill="#ff9a1f" />
          <path d="M1 12q0 8 7 11 8 3 13-3 3-3 2-8-2 6-7 7-8 2-11-4-2-4 1-7-4 0-5 4z" fill="#f8374e" />
          <path d="M15 0q5 3 6 7 2 5 0 9 0-8-5-10-3-2-1-6z" fill="#ffd83a" />
          <circle cx="12" cy="13" r="5" fill="#7a3fe0" />
          <path d="M6 10q4-3 7 0l-3 2q1 3 4 2-2 4-6 2-3-2-2-6z" fill="#ffb02e" />
        </svg>
      </button>
      <div className="ml-auto flex items-center gap-2">
        <ChevronUp className="h-4 w-4" strokeWidth={1.5} />
        <svg viewBox="0 0 16 18" className="h-[18px] w-4" fill="none" stroke="#fff">
          <rect x="3.500" y="5.500" width="7" height="8" rx="1" />
          <path d="M10.500 8l3-1.500v6l-3-1.500M3 2.500q4-2 8 0M3 16.500q4 2 8 0" />
        </svg>
        <svg viewBox="0 0 16 16" className="h-4 w-4" fill="none" stroke="#fff">
          <path d="M4.500 2.500h11v8h-11M10 10.500v4M6.500 14.500h7M.5 1.500h4v4h-4zM2.500 5.500v5h2" />
        </svg>
        <svg viewBox="0 0 18 16" className="h-4 w-[18px]" fill="none" stroke="#fff">
          <path d="M1.500 5.500h3l4-3.500v12l-4-3.500h-3zM10.500 6q1.500 2 0 4M12.500 4q3.500 4 0 8M14.500 2q5 6 0 12" />
        </svg>
        <div className="w-14 text-center text-[11px] leading-[18px]">
          11:21 PM
          <br />
          6/1/2025
        </div>
      </div>
      <button aria-label="Notifications" className="mr-[19px] ml-3.5">
        <svg viewBox="0 0 18 18" className="h-[18px] w-[18px]" fill="none" stroke="#fff">
          <path d="M1.500 2.500h15v11h-5l-2.500 2.500L6.500 13.500h-5z" />
        </svg>
      </button>
      <div className="mr-1 h-full w-px bg-[#3b4552]" />
    </footer>
  );
}

function Watermark() {
  return (
    <div className="pointer-events-none absolute right-[46px] bottom-[46px] flex items-center gap-1 font-['Liberation_Sans_Narrow','Roboto_Condensed','Roboto',sans-serif] text-[38px] text-white/60 [text-shadow:0_0_3px_#8888]">
      <span>ANY</span>
      <svg viewBox="0 0 56 64" className="h-16 w-14 drop-shadow-[0_0_2px_#8888]" fill="none" stroke="#fff" strokeOpacity=".8" strokeWidth="3">
        <path d="M14 3l38 24-38 26z" />
        <path d="M9 8H4v46l8 6 34-22" />
        <path d="M20 16v26l20-14" />
      </svg>
      <span>RUN</span>
    </div>
  );
}

export default function App() {
  return (
    <div className="relative flex min-h-screen flex-col overflow-hidden bg-[#f3f4f5] font-['Open_Sans','Noto_Sans',sans-serif]">
      <BrowserChrome />
      <PortalPage />
      <CookieBanner />
      <DownloadsFlyout />
      <ExplorerWindow />
      <Taskbar />
      <Watermark />
    </div>
  );
}
